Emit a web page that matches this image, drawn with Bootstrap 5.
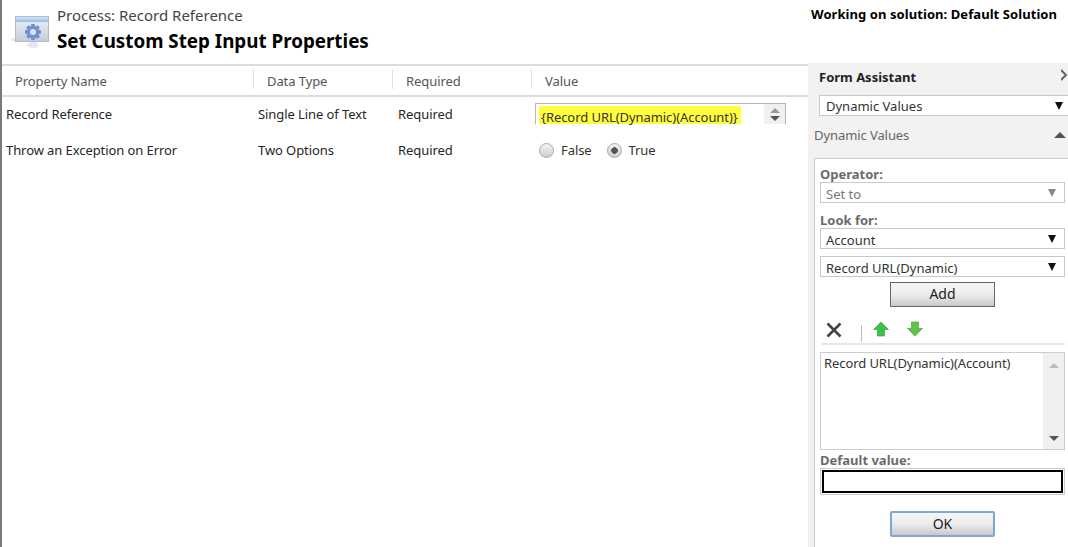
<!DOCTYPE html>
<html lang="en">
<head>
  <meta charset="UTF-8" />
  <title>Set Custom Step Input Properties</title>
  <link href="https://cdn.jsdelivr.net/npm/bootstrap@5.3.0/dist/css/bootstrap.min.css" rel="stylesheet" />
  <style>
    html, body { height: 100%; }
    body {
      height: 547px;
      overflow: hidden;
      background: #fff;
      color: #262626;
      font-family: "Noto Sans", "Liberation Sans", sans-serif;
      font-size: 13px;
      line-height: 18px;
      letter-spacing: -.08px;
      border-left: 2px solid #7a7a7a;
    }
    .top-head { height: 64px; }
    .head-icon { margin: 14px 6px 0 8px; flex: none; }
    .head-sub { font-size: 15px; line-height: 20px; color: #444; margin-top: 5px; letter-spacing: 0; }
    .head-title { font-size: 18.8px; line-height: 26px; font-weight: 700; color: #000; margin-top: 3px; letter-spacing: 0; }
    .head-solution { width: 258px; padding: 5px 0 0 1px; font-weight: 700; color: #000; flex: none; letter-spacing: .07px; }
    .main-area { height: 483px; }
    .grid-area { width: 806px; border-top: 2px solid #dcdcdc; flex: none; }
    .grid-head { height: 31px; border-bottom: 2px solid #dcdcdc; color: #555; }
    .grid-head > div { margin-top: 3px; height: 20px; padding-top: 3px; line-height: 18px; }
    .grid-head > div + div { border-left: 1px solid #e2e2e2; }
    .c1 { width: 251px; flex: none; }
    .c2 { width: 139px; flex: none; }
    .c3 { width: 139px; flex: none; }
    .grid-head .c1 { padding-left: 13px; }
    .grid-head .c2, .grid-head .c3, .grid-head .c4 { padding-left: 13px; }
    .grid-row { height: 36px; }
    .grid-row > div { padding-top: 8px; }
    .grid-row .c1 { padding-left: 4px; }
    .grid-row .c2 { padding-left: 5px; }
    .grid-row .c3 { padding-left: 6px; }
    .grid-row > .c4 { padding: 6px 0 0 4px; }
    .value-box {
      width: 251px; height: 22px;
      border: 1px solid #b5b5b5;
      border-bottom-color: #fff;
    }
    .value-mark { background: #ffff3c; color: #333; width: 202px; height: 18px; margin: 2px 0 0 3px; padding-left: 2px; line-height: 22px; letter-spacing: -.06px; }
    .scroll-strip { background: #f0f0f0; width: 21px; flex: none; }
    .value-strip { padding-top: 4px; gap: 3px; }
    .tri-up { width: 0; height: 0; border-left: 5px solid transparent; border-right: 5px solid transparent; border-bottom: 5px solid #999; }
    .tri-down { width: 0; height: 0; border-left: 5px solid transparent; border-right: 5px solid transparent; border-top: 5px solid #555; }
    .tri-panel { border-left-width: 6px; border-right-width: 6px; border-bottom: 6px solid #555; margin: 6px 2px 0 0; }
    .form-check-input.radio-opt {
      width: 15px; height: 15px; margin: 0;
      float: none;
      border: 1px solid #a9a9a9;
      background: linear-gradient(#f2f2f2, #cfcfcf);
    }
    .form-check-input.radio-opt:checked {
      background: radial-gradient(circle, #555 0 3px, transparent 3.6px), linear-gradient(#f2f2f2, #cfcfcf);
      border-color: #a9a9a9;
    }
    .radio-line { padding-top: 2px; }
    .radio-line label { margin: 0 15px 0 7px; color: #333; }
    .side-panel { width: 260px; flex: none; background: #f2f2f2; overflow: hidden; margin-top: -1px; height: 484px; padding-left: 6px; }
    .side-title { font-weight: 700; height: 32px; padding: 5px 0 0 5px; color: #222; letter-spacing: 0; }
    .side-chev { position: absolute; right: 0; top: 6px; }
    .side-sub { color: #666; height: 42px; padding-top: 10px; }
    .box-select.form-select {
      height: 21px; padding: 2px 0 0 5px; border-radius: 0;
      border: 1px solid #c8c8c8;
      font-size: 13px; line-height: 18px; color: #333;
      box-shadow: none;
      background-image: url("data:image/svg+xml,%3Csvg xmlns='http://www.w3.org/2000/svg' width='8' height='8'%3E%3Cpath d='M0 0h8L4 8z' fill='%23111'/%3E%3C/svg%3E");
      background-size: 8px 8px;
      background-position: right 8px center;
    }
    .pick-top.box-select.form-select { width: 250px; margin-left: 5px; padding: 1px 0 0 6px; background-position: right 5px center; }
    .inner-box { background: #fff; border: 1px solid #ccc; border-right: 0; height: 400px; padding: 0 0 0 5px; width: 260px; }
    .inner-col { width: 245px; }
    .field-label { font-weight: 700; color: #6b6b6b; line-height: 16px; letter-spacing: 0; }
    .label-op { padding-top: 7px; }
    .label-look { padding-top: 9px; }
    .label-default { padding-top: 2px; }
    .box-select.off.form-select {
      color: #777; background-color: #fff; opacity: 1;
      background-image: url("data:image/svg+xml,%3Csvg xmlns='http://www.w3.org/2000/svg' width='8' height='8'%3E%3Cpath d='M0 0h8L4 8z' fill='%23888'/%3E%3C/svg%3E");
    }
    .select-gap { margin-top: 7px; }
    .add-wrap { margin-top: 5px; }
    .ok-wrap { margin-top: 16px; }
    .side-btn.btn {
      width: 105px; height: 25px; padding: 0 0 2px;
      border-radius: 0;
      font-size: 14px; line-height: 20px; color: #222;
      border: 1px solid #666;
      background: linear-gradient(#f6f6f6, #ececec 50%, #c9c9c9);
    }
    .side-btn.ok-btn.btn { border: 2px solid #7fa6d8; border-radius: 2px; height: 26px; padding: 0; }
    .tool-strip { height: 33px; border-bottom: 2px solid #e6e6e6; margin: 5px 0 0 2px; }
    .tool-x { margin: 10px 0 0 4px; }
    .tool-sep { width: 1px; height: 17px; background: #bbb; margin: 13px 11px 0 19px; }
    .tool-arrow { margin-top: 9px; }
    .tool-arrow + .tool-arrow { margin-left: 18px; }
    .list-box { height: 98px; border: 1px solid #ccc; margin-top: 7px; }
    .list-text { padding: 1px 0 0 3px; flex-grow: 1; color: #333; }
    .list-strip { padding: 10px 0 8px; }
    .list-strip .tri-up { border-bottom-color: #bbb; }
    .entry-box { height: 27px; border: 1px solid #ccc; padding: 1px; }
    .entry-box .form-control { height: 23px; border: 2px solid #000; border-radius: 0; box-shadow: none; padding: 0; }
  </style>
</head>
<body>

<div class="top-head d-flex">
  <svg class="head-icon" width="41" height="36" viewBox="0 0 41 36">
    <defs>
      <linearGradient id="winBody" x1="0" y1="0" x2="0" y2="1"><stop offset="0" stop-color="#eef1f6"/><stop offset="1" stop-color="#c6ccd6"/></linearGradient>
      <linearGradient id="winBar" x1="0" y1="0" x2="0" y2="1"><stop offset="0" stop-color="#d3e6f8"/><stop offset="1" stop-color="#8fbfea"/></linearGradient>
    </defs>
    <path d="M0 26 L6 23 V28 Z" fill="#e4e4e4"/>
    <rect x="5.500" y="2.500" width="33" height="25" fill="url(#winBody)" stroke="#b4bac4"/>
    <rect x="6" y="3" width="32" height="5" fill="url(#winBar)"/>
    <g fill="#6f8fd6">
      <circle cx="23" cy="18" r="6"/>
      <rect x="21" y="10" width="4" height="16" rx="1"/>
      <rect x="15" y="16" width="16" height="4" rx="1"/>
      <rect x="21" y="10" width="4" height="16" rx="1" transform="rotate(45 23 18)"/>
      <rect x="21" y="10" width="4" height="16" rx="1" transform="rotate(-45 23 18)"/>
    </g>
    <circle cx="23" cy="18" r="3" fill="#dfe6f3"/>
    <ellipse cx="23" cy="31" rx="6" ry="3" fill="#e3e8f4"/>
  </svg>
  <div class="flex-grow-1">
    <div class="head-sub">Process: Record Reference</div>
    <div class="head-title">Set Custom Step Input Properties</div>
  </div>
  <div class="head-solution">Working on solution: Default Solution</div>
</div>

<div class="main-area d-flex">
  <div class="grid-area">
    <div class="grid-head d-flex">
      <div class="c1">Property Name</div>
      <div class="c2">Data Type</div>
      <div class="c3">Required</div>
      <div class="c4">Value</div>
    </div>
    <div class="grid-row d-flex">
      <div class="c1">Record Reference</div>
      <div class="c2">Single Line of Text</div>
      <div class="c3">Required</div>
      <div class="c4">
        <div class="value-box d-flex justify-content-between">
          <div class="value-mark">{Record URL(Dynamic)(Account)}</div>
          <div class="scroll-strip value-strip d-flex flex-column align-items-center">
            <span class="tri-up"></span>
            <span class="tri-down"></span>
          </div>
        </div>
      </div>
    </div>
    <div class="grid-row d-flex">
      <div class="c1">Throw an Exception on Error</div>
      <div class="c2">Two Options</div>
      <div class="c3">Required</div>
      <div class="c4">
        <div class="radio-line d-flex align-items-center">
          <input class="form-check-input radio-opt ms-1" type="radio" name="throwErr" id="optFalse" />
          <label for="optFalse">False</label>
          <input class="form-check-input radio-opt" type="radio" name="throwErr" id="optTrue" checked />
          <label for="optTrue">True</label>
        </div>
      </div>
    </div>
  </div>

  <div class="side-panel">
    <div class="side-title position-relative">
      Form Assistant
      <svg class="side-chev" width="7" height="12" viewBox="0 0 7 12"><path d="M0 1 L5 6 L0 11" fill="none" stroke="#666" stroke-width="2"/></svg>
    </div>
    <select class="form-select box-select pick-top"><option>Dynamic Values</option></select>
    <div class="side-sub d-flex justify-content-between">
      <span>Dynamic Values</span>
      <span class="tri-up tri-panel"></span>
    </div>
    <div class="inner-box">
      <div class="inner-col">
        <div class="field-label label-op">Operator:</div>
        <select class="form-select box-select off" disabled><option>Set to</option></select>
        <div class="field-label label-look">Look for:</div>
        <select class="form-select box-select"><option>Account</option></select>
        <select class="form-select box-select select-gap"><option>Record URL(Dynamic)</option></select>
        <div class="text-center add-wrap"><button type="button" class="btn side-btn">Add</button></div>
        <div class="tool-strip d-flex">
          <svg class="tool-x" width="16" height="16" viewBox="0 0 16 16"><path d="M1.500 1.500 L14.500 14.500 M14.500 1.500 L1.500 14.500" stroke="#444" stroke-width="2.600" fill="none"/></svg>
          <span class="tool-sep"></span>
          <svg class="tool-arrow" width="16" height="16" viewBox="0 0 16 16"><path d="M8 1 L15.500 8.500 H11.500 V15 H4.500 V8.500 H.5 Z" fill="#3cc04a" stroke="#2f9c3c" stroke-width=".6"/></svg>
          <svg class="tool-arrow" width="16" height="16" viewBox="0 0 16 16"><path d="M8 15 L15.500 7.500 H11.500 V1 H4.500 V7.500 H.5 Z" fill="#5fc548" stroke="#3f9c34" stroke-width=".6"/></svg>
        </div>
        <div class="list-box d-flex">
          <div class="list-text">Record URL(Dynamic)(Account)</div>
          <div class="scroll-strip list-strip d-flex flex-column justify-content-between align-items-center">
            <span class="tri-up"></span>
            <span class="tri-down"></span>
          </div>
        </div>
        <div class="field-label label-default">Default value:</div>
        <div class="entry-box"><input class="form-control" type="text" /></div>
        <div class="text-center ok-wrap"><button type="button" class="btn side-btn ok-btn">OK</button></div>
      </div>
    </div>
  </div>
</div>

<script src="https://cdn.jsdelivr.net/npm/bootstrap@5.3.0/dist/js/bootstrap.bundle.min.js"></script>
</body>
</html>
